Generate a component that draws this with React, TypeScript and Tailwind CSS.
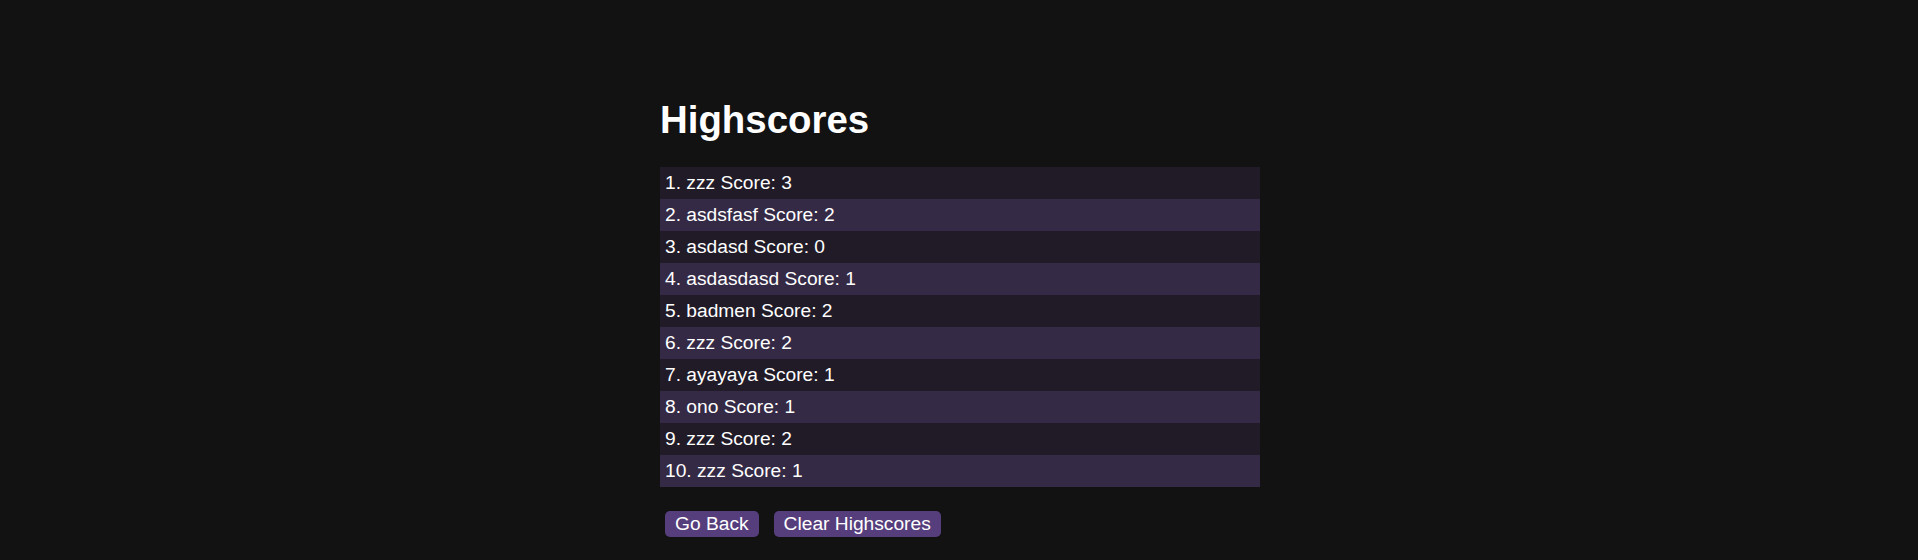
const scores = [
  { name: "zzz", score: 3 },
  { name: "asdsfasf", score: 2 },
  { name: "asdasd", score: 0 },
  { name: "asdasdasd", score: 1 },
  { name: "badmen", score: 2 },
  { name: "zzz", score: 2 },
  { name: "ayayaya", score: 1 },
  { name: "ono", score: 1 },
  { name: "zzz", score: 2 },
  { name: "zzz", score: 1 },
];

export default function App() {
  return (
    <div className="min-h-screen bg-[#121212] text-white font-['Liberation_Sans',Arial,sans-serif]">
      <div className="mx-auto w-[602px] pl-[2px] pt-[98px]">
        <h1 className="text-[38.4px] leading-[44px] font-bold mb-[25px]">Highscores</h1>

        <ul>
          {scores.map((s, i) => (
            <li
              key={i}
              className={
                "h-[32px] px-[5px] py-[5px] text-[19.2px] leading-[22px] " +
                (i % 2 === 0 ? "bg-[#211b28]" : "bg-[#352a45]")
              }
            >
              {i + 1}. {s.name} Score: {s.score}
            </li>
          ))}
        </ul>

        <div className="mt-[24px] flex gap-[15px] pl-[5px]">
          <button className="h-[26px] px-[10px] rounded-[5px] bg-[#563d7c] text-[19.2px] leading-[22px] text-white">
            Go Back
          </button>
          <button className="h-[26px] px-[10px] rounded-[5px] bg-[#563d7c] text-[19.2px] leading-[22px] text-white">
            Clear Highscores
          </button>
        </div>
      </div>
    </div>
  );
}
